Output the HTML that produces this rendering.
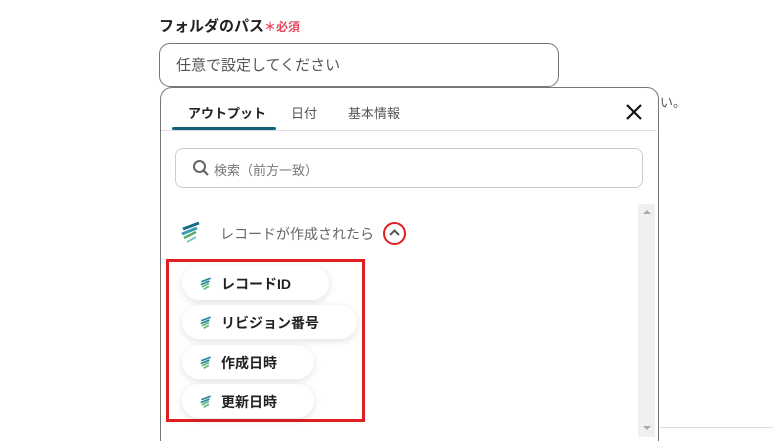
<!DOCTYPE html>
<html><head><meta charset="utf-8"><style>
*{box-sizing:border-box;margin:0;padding:0}
html,body{width:773px;height:441px;overflow:hidden}
body{background:#fff;position:relative;font-family:"Liberation Sans","Noto Sans CJK JP",sans-serif}
.a{position:absolute}
.lbl{left:159px;top:15px;font-size:15px;font-weight:bold;color:#222}
.req{color:#e8455a;font-size:12px;font-weight:bold}
.inp{left:159px;top:43px;width:400px;height:44px;border:1px solid #777;border-radius:11px;font-size:15px;color:#555;padding:10px 0 0 16px}
.panel{left:160px;top:87px;width:499px;height:370px;border:1px solid #777;border-radius:12px;background:#fff}
.tab{top:103px;font-size:13px;color:#555}
.pill{left:182px;height:34px;border-radius:17px;background:#fff;box-shadow:0 2px 8px rgba(0,0,0,.12);font-size:14px;font-weight:bold;color:#222;padding:8px 0 0 39px}
.pill svg{position:absolute;left:17px;top:11px}
</style></head><body>
<div class="a lbl">フォルダのパス<span class="req">＊必須</span></div>
<div class="a inp">任意で設定してください</div>
<div class="a" style="left:660px;top:92px;font-size:13px;color:#555">い。</div>
<div class="a" style="left:659px;top:427px;width:114px;height:1px;background:#ddd"></div>
<div class="a panel"></div>
<div class="a tab" style="left:188px;color:#222;font-weight:bold">アウトプット</div>
<div class="a tab" style="left:291px">日付</div>
<div class="a tab" style="left:348px">基本情報</div>
<div class="a" style="left:161px;top:130px;width:496px;height:1px;background:#ddd"></div>
<div class="a" style="left:172px;top:127px;width:104px;height:3px;background:#0f6177;border-radius:2px"></div>
<svg class="a" style="left:625px;top:103px" width="18" height="18" viewBox="0 0 18 18"><path d="M2 2L16 16M16 2L2 16" stroke="#111" stroke-width="2.2"/></svg>
<div class="a" style="left:175px;top:148px;width:468px;height:40px;border:1px solid #ccc;border-radius:8px"></div>
<svg class="a" style="left:192px;top:159px" width="18" height="18" viewBox="0 0 18 18"><circle cx="7.5" cy="7.5" r="5.5" fill="none" stroke="#666" stroke-width="2"/><path d="M11.5 11.5L16 16" stroke="#666" stroke-width="2.2"/></svg>
<div class="a" style="left:214px;top:160px;font-size:13px;color:#777">検索（前方一致）</div>
<div class="a" style="left:638px;top:204px;width:17px;height:233px;background:#f0f0f0"></div>
<div class="a" style="left:643px;top:210px;border:4px solid transparent;border-bottom:4px solid #aaa;border-top:0"></div>
<div class="a" style="left:643px;top:426px;border:4px solid transparent;border-top:4px solid #aaa;border-bottom:0"></div>
<svg class="a" style="left:179px;top:221px" width="24" height="24" viewBox="0 0 24 24"><path d="M4 8L20 2" stroke="#1a6a86" stroke-width="3"/><path d="M3 13L18 7" stroke="#3a9fb0" stroke-width="3"/><path d="M5 17L17 11" stroke="#5aae6a" stroke-width="2.5"/><path d="M8 21L17 16" stroke="#7cc7c9" stroke-width="2"/></svg>
<div class="a" style="left:220px;top:224px;font-size:14px;color:#666">レコードが作成されたら</div>
<div class="a" style="left:383px;top:222px;width:23px;height:23px;border:2.5px solid #e02020;border-radius:50%"></div>
<svg class="a" style="left:388px;top:228px" width="13" height="10" viewBox="0 0 13 10"><path d="M2 7L6.5 2.5L11 7" fill="none" stroke="#555" stroke-width="2"/></svg>
<div class="a" style="left:166px;top:259px;width:199px;height:163px;border:3px solid #e02020"></div>
<div class="a pill" style="top:266px;width:147px"><svg width="14" height="14" viewBox="0 0 24 24"><path d="M4 8L20 2M3 13L18 7" stroke="#2a8aa0" stroke-width="3"/><path d="M5 17L17 11M8 21L17 16" stroke="#6ab87a" stroke-width="3"/></svg>レコードID</div>
<div class="a pill" style="top:305px;width:175px"><svg width="14" height="14" viewBox="0 0 24 24"><path d="M4 8L20 2M3 13L18 7" stroke="#2a8aa0" stroke-width="3"/><path d="M5 17L17 11M8 21L17 16" stroke="#6ab87a" stroke-width="3"/></svg>リビジョン番号</div>
<div class="a pill" style="top:345px;width:132px"><svg width="14" height="14" viewBox="0 0 24 24"><path d="M4 8L20 2M3 13L18 7" stroke="#2a8aa0" stroke-width="3"/><path d="M5 17L17 11M8 21L17 16" stroke="#6ab87a" stroke-width="3"/></svg>作成日時</div>
<div class="a pill" style="top:384px;width:132px"><svg width="14" height="14" viewBox="0 0 24 24"><path d="M4 8L20 2M3 13L18 7" stroke="#2a8aa0" stroke-width="3"/><path d="M5 17L17 11M8 21L17 16" stroke="#6ab87a" stroke-width="3"/></svg>更新日時</div>
</body></html>
